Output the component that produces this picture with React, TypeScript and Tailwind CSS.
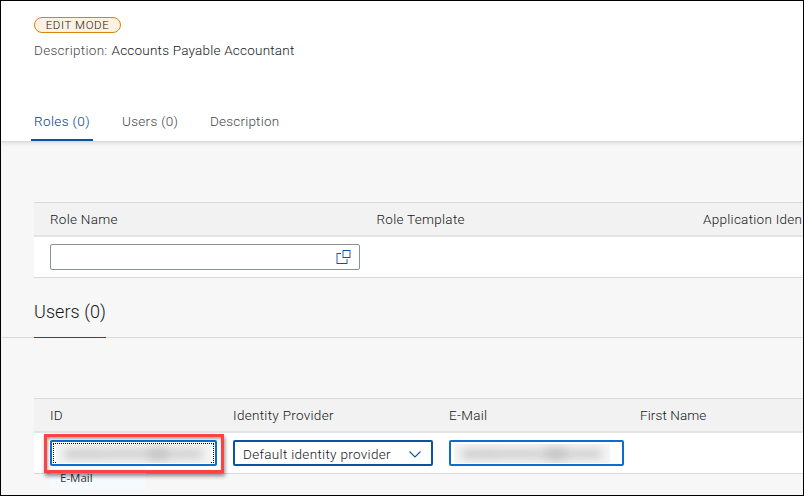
import React from "react";

function ValueHelpIcon() {
  return (
    <svg width="15" height="14" viewBox="0 0 15 14" shapeRendering="crispEdges">
      <path d="M0 3h2v11H0zM10 9h2v5h-2zM6 0h2v8H6zM13 0h2v8h-2z" fill="#8fb3da" />
      <path d="M1 3h4v1H1zM1 13h10v1H1zM7 0h7v1H7zM7 7h7v1H7z" fill="#0854a0" />
    </svg>
  );
}

function RedactedValue({ className = "" }: { className?: string }) {
  return (
    <div className={`flex h-[19px] items-center overflow-hidden bg-[#f6f6f6] pl-2 ${className}`}>
      <div className="flex h-3 w-full items-center blur-[5px]">
        <span className="h-2.5 w-9 bg-[#cbcbcb]" />
        <span className="h-2.5 w-12 bg-[#cfcfcf]" />
        <span className="h-3.5 w-5 bg-[#c3c3c3]" />
        <span className="mr-2 h-2.5 flex-1 bg-[#cfcfcf]" />
      </div>
    </div>
  );
}

export default function App() {
  return (
    <div className="relative flex h-[496px] w-[804px] flex-col overflow-hidden border border-black bg-[#f7f7f7] font-['Roboto','Liberation_Sans',sans-serif] text-[13.5px] font-light text-[#15181b]">
      <header className="relative flex h-[141px] shrink-0 flex-col border-b border-[#d9d9d9] bg-white pl-[33px] shadow-[0_1px_4px_rgba(0,0,0,0.12)]">
        <div className="mt-4 flex h-4 w-[87px] items-center justify-center rounded-full border border-[#d98212] bg-[#fef1e2] pt-0.5 text-[11.5px] leading-none tracking-[0.6px]">
          EDIT MODE
        </div>
        <div className="mt-[7px] flex h-5 items-center gap-1 whitespace-nowrap">
          <span className="tracking-[0.3px] text-[#45484b]">Description:</span>
          <span className="tracking-[0.22px]">Accounts Payable Accountant</span>
        </div>
        <nav className="-ml-[3px] mt-[50px] flex h-[31px] text-[#45484b]">
          <div className="h-[31px] w-[62px] border-b-2 border-[#0854a0] pl-[3px] pt-px leading-5 tracking-[0.38px] text-[#003e86]">Roles (0)</div>
          <div className="ml-[29px] w-14 whitespace-nowrap pt-px leading-5 tracking-[0.3px]">Users (0)</div>
          <div className="ml-8 pt-px leading-5 tracking-[0.2px]">Description</div>
        </nav>
      </header>

      <section className="ml-[33px] mt-[60px] shrink-0 border-y border-[#d9d9d9] bg-white">
        <div className="grid h-[34px] grid-cols-[326.5px_326.5px_100px] items-center border-b-2 border-[#e4e4e4] bg-[#f2f2f2] pl-4 tracking-[0.28px]">
          <span>Role Name</span>
          <span>Role Template</span>
          <span className="whitespace-nowrap">Application Iden</span>
        </div>
        <div className="flex h-10 items-center pl-4">
          <div className="flex h-[26px] w-[310px] items-center justify-end rounded-[2px] border border-[#89919a] pr-2">
            <ValueHelpIcon />
          </div>
        </div>
      </section>

      <div className="flex h-[60px] shrink-0 border-b border-[#d9d9d9] pl-[33px]">
        <h2 className="h-[60px] w-[72px] whitespace-nowrap border-b border-[#0854a0] pt-[22px] text-[18px] leading-6 tracking-[0.05px]">Users (0)</h2>
      </div>

      <section className="ml-[33px] mt-[60px] shrink-0 border-y border-[#d9d9d9] bg-white">
        <div className="grid h-[34px] grid-cols-[183px_216px_191px_160px] items-center border-b-2 border-[#e4e4e4] bg-[#f2f2f2] pl-4 tracking-[0.2px]">
          <span>ID</span>
          <span className="tracking-[0.3px]">Identity Provider</span>
          <span className="tracking-[0.3px]">E-Mail</span>
          <span className="tracking-[0.1px]">First Name</span>
        </div>
        <div className="grid h-10 grid-cols-[183px_216px_191px] items-center pl-4">
          <div className="relative h-[26px] w-[167px] rounded-[2px] border-2 border-[#0a6ed1] p-px">
            <div className="h-full border border-dotted border-black">
              <RedactedValue className="ml-0.5 w-[155px]" />
            </div>
            <div className="absolute -left-2 -top-2 z-10 h-[39px] w-[180px] border-[3px] border-[#fb4346] shadow-[1px_3px_4px_rgba(0,0,0,0.45),inset_1px_2px_3px_rgba(0,0,0,0.35)]" />
            <div className="absolute -left-0.5 top-6 h-[23px] w-24 bg-[#f5faff] pl-2.5 pt-0.5 font-['Open_Sans'] text-[11.5px] font-normal leading-[19px] text-[#32363a]">E-Mail</div>
          </div>
          <div className="flex h-[26px] w-[200px] items-center justify-between rounded-[2px] border-2 border-[#0854a0] pl-2 pr-2.5">
            <span className="pt-0.5 tracking-[0.32px]">Default identity provider</span>
            <svg className="mt-[3px]" width="12" height="7" viewBox="0 0 12 7" fill="none">
              <path d="m.5.5 5.5 5.5L11.5.5" stroke="#0854a0" strokeWidth="1.1" />
            </svg>
          </div>
          <div className="h-[26px] w-[175px] rounded-[2px] border-2 border-[#0a6ed1] pl-[3px] pt-0.5">
            <RedactedValue className="w-[156px]" />
          </div>
        </div>
      </section>
    </div>
  );
}
